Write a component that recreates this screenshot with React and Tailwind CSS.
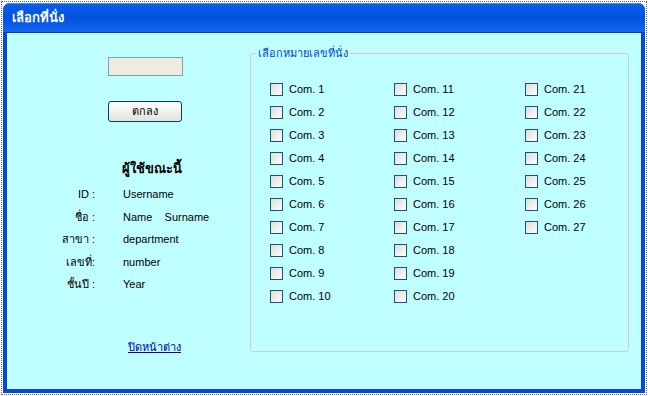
import React from 'react';

const seats = [
  Array.from({ length: 10 }, (_, i) => i + 1),
  Array.from({ length: 10 }, (_, i) => i + 11),
  Array.from({ length: 7 }, (_, i) => i + 21),
];

const userRows = [
  { label: 'ID :', value: 'Username' },
  { label: 'ชื่อ :', value: 'Name\u00a0\u00a0\u00a0\u00a0Surname' },
  { label: 'สาขา :', value: 'department' },
  { label: 'เลขที่:', value: 'number' },
  { label: 'ชั้นปี :', value: 'Year' },
];

const font = { fontFamily: 'Tahoma, "Liberation Sans", "Noto Sans", "DejaVu Sans", sans-serif' };

const SeatBox = ({ n }) => (
  <label className="flex items-center h-[23px] cursor-pointer">
    <span className="w-[13px] h-[13px] border border-[#1c5180] bg-gradient-to-br from-[#dcdcd7] to-white" />
    <span className="ml-[6px] text-[11px] text-black">Com. {n}</span>
  </label>
);

export default function App() {
  return (
    <div className="w-[648px] h-[396px] bg-white p-px" style={font}>
      <div className="h-full border border-dotted border-[#666] p-px">
        <div className="h-full flex flex-col rounded-t-[7px] bg-[#0848d8] overflow-hidden">
          {/* Title bar */}
          <div className="h-[30px] flex items-center pl-[9px] border-t border-[#3d8df5] bg-gradient-to-b from-[#0a5ee9] via-[#0052df] to-[#1466f0] border-b border-b-[#0a3ab8]">
            <span className="text-white font-bold text-[13px]">เลือกที่นั่ง</span>
          </div>

          {/* Body */}
          <div className="flex-1 mx-[4px] mb-[4px] bg-[#c0ffff] flex">
            <div className="w-[243px] pt-[24px] flex flex-col">
              <div className="ml-[101px] w-[75px] h-[19px] bg-[#efebde] border border-[#7f9db9]" />
              <button className="mt-[25px] ml-[101px] w-[74px] h-[21px] rounded-[3px] border border-[#003c74] bg-gradient-to-b from-white to-[#e3e3db] text-[11px] text-black">
                ตกลง
              </button>
              <div className="mt-[38px] pl-[115px] h-[18px] leading-[18px] font-bold text-[13px] text-black">
                ผู้ใช้ขณะนี้
              </div>
              <div className="mt-[5px] flex flex-col">
                {userRows.map((r) => (
                  <div key={r.label} className="flex items-center h-[22.5px] text-[11px] text-black">
                    <span className="w-[88px] text-right">{r.label}</span>
                    <span className="ml-[28px] whitespace-pre">{r.value}</span>
                  </div>
                ))}
              </div>
              <a href="#" className="mt-[43px] ml-[121px] text-[11px] text-[#0000a0] underline">
                ปิดหน้าต่าง
              </a>
            </div>

            <fieldset className="mt-[12px] w-[379px] h-[307px] border border-[#d0d0bf] rounded-[3px] pt-[16px]">
              <legend className="ml-[5px] px-[2px] text-[11px] text-[#0046d5]">เลือกหมายเลขที่นั่ง</legend>
              <div className="pl-[19px] grid grid-cols-[124px_131px_auto]">
                {seats.map((col, i) => (
                  <div key={i} className="flex flex-col">
                    {col.map((n) => (
                      <SeatBox key={n} n={n} />
                    ))}
                  </div>
                ))}
              </div>
            </fieldset>
          </div>
        </div>
      </div>
    </div>
  );
}
